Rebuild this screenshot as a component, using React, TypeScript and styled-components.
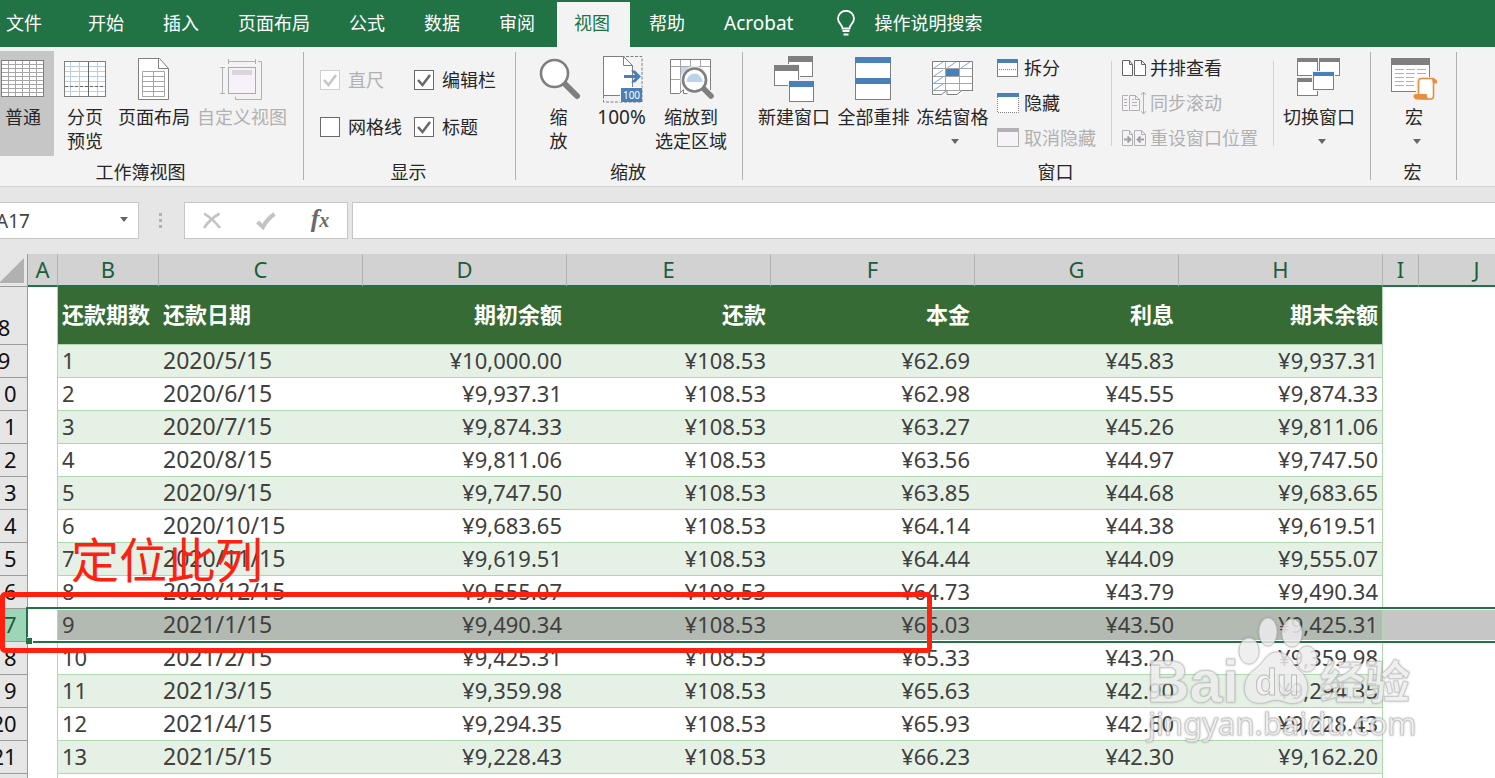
import React from "react";
import styled, { createGlobalStyle, css } from "styled-components";

const GlobalStyle = createGlobalStyle`
  *, *::before, *::after { box-sizing: border-box; }
  body {
    margin: 0;
    overflow: hidden;
    background: #ffffff;
    font-family: "Noto Sans", "Noto Sans CJK SC", sans-serif;
  }
  button, input { font: inherit; color: inherit; border: 0; background: none; padding: 0; margin: 0; }
`;

const Workbook = styled.div`
  display: flex;
  flex-direction: column;
  height: 100vh;
  overflow: hidden;
  font-size: 18px;
  color: #262626;
`;

/* ---------- tab strip ---------- */

const TabStrip = styled.nav`
  display: flex;
  flex: none;
  height: 47px;
  padding-top: 2px;
  background: #217346;
  color: #ffffff;
`;

const Tab = styled.button<{ $active?: boolean; $file?: boolean; $latin?: boolean }>`
  flex: none;
  margin-left: ${(p) => (p.$file ? 0 : 2)}px;
  padding: ${(p) => (p.$file ? "0 27px 3px 6px" : "0 20px 3px 17px")};
  line-height: 24px;
  white-space: nowrap;
  font-size: ${(p) => (p.$latin ? 19 : 18)}px;
  color: ${(p) => (p.$active ? "#217346" : "#ffffff")};
  background: ${(p) => (p.$active ? "#f3f3f3" : "transparent")};
`;

const Search = styled.button`
  display: flex;
  align-items: center;
  gap: 19px;
  padding: 0 0 3px 24px;
  line-height: 24px;
  color: #ffffff;
  white-space: nowrap;
`;

/* ---------- ribbon ---------- */

const Ribbon = styled.section`
  display: flex;
  flex: none;
  height: 140px;
  padding-top: 4px;
  background: #f3f3f3;
  border-bottom: 1px solid #d2d2d2;
`;

const Group = styled.div<{ $width: number }>`
  display: flex;
  flex-direction: column;
  flex: none;
  width: ${(p) => p.$width}px;
`;

const GroupBody = styled.div<{ $indent?: number }>`
  display: flex;
  height: 109px;
  padding-left: ${(p) => p.$indent ?? 0}px;
`;

const GroupLabel = styled.div<{ $shift?: number }>`
  padding-right: ${(p) => p.$shift ?? 2}px;
  line-height: 24px;
  text-align: center;
`;

const Divider = styled.div`
  flex: none;
  width: 1px;
  height: 128px;
  margin-top: 1px;
  background: #b1b1b1;
`;

const InnerDivider = styled.div`
  flex: none;
  width: 1px;
  height: 85px;
  margin-top: 10px;
  background: #d2d2d2;
`;

const BigButtonBox = styled.button<{ $width: number; $pressed?: boolean; $bleed?: boolean }>`
  display: flex;
  flex-direction: column;
  align-items: center;
  flex: none;
  width: ${(p) => p.$width}px;
  height: 105px;
  margin-left: ${(p) => (p.$bleed ? -8 : 0)}px;
  padding-top: 5px;
  line-height: 24px;
  white-space: nowrap;
  background: ${(p) => (p.$pressed ? "#c6c6c6" : "transparent")};
  &:disabled { color: #b1b1b1; }
  svg { flex: none; display: block; }
`;

const BigLabel = styled.span<{ $latin?: boolean }>`
  display: flex;
  flex-direction: column;
  align-items: center;
  margin-top: 1px;
  font-size: ${(p) => (p.$latin ? 19 : 18)}px;
`;

const ArrowSlot = styled.span`
  display: flex;
  align-items: center;
  height: 24px;
  padding-left: 5px;
`;

const SmallColumn = styled.div<{ $width: number; $pad: number }>`
  display: flex;
  flex-direction: column;
  flex: none;
  width: ${(p) => p.$width}px;
  padding-left: ${(p) => p.$pad}px;
`;

const SmallButton = styled.button<{ $gap: number }>`
  display: flex;
  align-items: center;
  gap: ${(p) => p.$gap}px;
  height: 35px;
  line-height: 24px;
  padding-bottom: 1px;
  white-space: nowrap;
  &:disabled { color: #b1b1b1; }
  svg { flex: none; display: block; }
`;

const CheckGrid = styled.div`
  display: grid;
  grid-template-columns: 94px auto;
  grid-auto-rows: 20px;
  row-gap: 27px;
  padding: 19px 0 0 16px;
`;

const CheckLabel = styled.label<{ $off?: boolean }>`
  display: flex;
  align-items: center;
  gap: 8px;
  white-space: nowrap;
  line-height: 20px;
  color: ${(p) => (p.$off ? "#b1b1b1" : "#262626")};
`;

const tick = (stroke: string) =>
  `url("data:image/svg+xml,%3Csvg xmlns='http://www.w3.org/2000/svg' viewBox='0 0 18 18'%3E%3Cpath d='M3 9l4.5 5L15 4' fill='none' stroke='%23${stroke}' stroke-width='2.6'/%3E%3C/svg%3E")`;

const CheckInput = styled.input`
  appearance: none;
  width: 20px;
  height: 20px;
  && { border: 1px solid #6a6a6a; background-color: #ffffff; }
  &:checked { background-image: ${tick("6a6a6a")}; }
  &&:disabled { border-color: #d0d0d0; }
  &:disabled:checked { background-image: ${tick("c6c6c6")}; }
`;

/* ---------- formula bar ---------- */

const FormulaBar = styled.section`
  display: flex;
  flex: none;
  height: 67px;
  padding: 15px 0;
  background: #e6e6e6;
`;

const NameBox = styled.div`
  display: flex;
  align-items: center;
  flex: none;
  width: 151px;
  margin-left: -12px;
  padding: 0 10px 0 7px;
  background: #ffffff;
  border: 1px solid #c6c6c6;
  color: #444444;
  input { flex: 1; min-width: 0; font-size: 19px; line-height: 24px; }
  button { display: flex; padding-bottom: 2px; }
`;

const Grip = styled.div`
  display: flex;
  flex-direction: column;
  align-items: center;
  justify-content: center;
  gap: 3px;
  width: 45px;
  padding-right: 2px;
  span { width: 3px; height: 3px; background: #b1b1b1; }
`;

const FormulaTools = styled.div`
  display: flex;
  align-items: center;
  justify-content: space-around;
  width: 164px;
  background: #ffffff;
  border: 1px solid #c6c6c6;
  svg { display: block; }
`;

const FxButton = styled.button`
  && {
    font-family: "Liberation Serif", serif;
    font-style: italic;
    font-weight: bold;
    font-size: 26px;
    line-height: 24px;
    color: #6a6a6a;
    padding-bottom: 4px;
  }
  width: 20px;
  sub { font-size: 20px; line-height: 18px; vertical-align: baseline; }
`;

const FormulaInput = styled.input`
  flex: 1;
  min-width: 0;
  && {
    margin-left: 4px;
    padding: 0 8px;
    background: #ffffff;
    border: 1px solid #c6c6c6;
    border-right: 0;
  }
`;

/* ---------- sheet ---------- */

const SheetArea = styled.main`
  position: relative;
  flex: 1;
  min-height: 0;
  overflow: hidden;
`;

const Grid = styled.table`
  table-layout: fixed;
  width: calc(100% + 19px);
  min-width: 1554px;
  margin-left: -19px;
  border-collapse: separate;
  border-spacing: 0;
  font-size: 22px;
  line-height: 30px;
  color: #404040;
  th, td { padding: 0; white-space: nowrap; }
`;

const Corner = styled.th`
  height: 33px;
  background: #e6e6e6;
  border-right: 1px solid #9b9b9b;
  border-bottom: 1px solid #9b9b9b;
  vertical-align: bottom;
  svg { display: block; margin: 0 3px 3px auto; }
`;

const ColumnHead = styled.th`
  height: 33px;
  font-weight: 400;
  color: #1b5e3c;
  background: #d2d2d2;
  border-right: 1px solid #b1b1b1;
  border-bottom: 2px solid #217346;
  vertical-align: top;
`;

const RowHead = styled.th<{ $selected?: boolean }>`
  font-weight: 400;
  vertical-align: bottom;
  color: ${(p) => (p.$selected ? "#1b5e3c" : "#111111")};
  background: ${(p) => (p.$selected ? "#9fd5b7" : "#e6e6e6")};
  border-right: 1px solid #9b9b9b;
  border-bottom: 1px solid #9b9b9b;
  && { padding-bottom: 2px; }
`;

const edge = css`border-right: 1px solid #b0d8b0;`;

const TitleCell = styled.th<{ $right?: boolean; $last?: boolean }>`
  height: 58px;
  font-weight: 700;
  color: #ffffff;
  background: #376b35;
  border-bottom: 1px solid #b0d8b0;
  text-align: ${(p) => (p.$right ? "right" : "left")};
  && { padding: 0 ${(p) => (p.$last ? 4 : 5)}px 3px 4px; }
  ${(p) => p.$last && edge}
`;

const Cell = styled.td<{ $fill: string; $right?: boolean; $last?: boolean; $date?: boolean }>`
  height: 33px;
  background: ${(p) => p.$fill};
  border-bottom: 1px solid #b0d8b0;
  text-align: ${(p) => (p.$right ? "right" : "left")};
  vertical-align: top;
  font-size: ${(p) => (p.$date ? 23 : 22)}px;
  && { padding: 0 ${(p) => (p.$last ? 4 : 5)}px 0 4px; }
  ${(p) => p.$last && edge}
`;

const MarginCell = styled.td`
  position: relative;
  ${edge}
`;

const BlankCell = styled.td<{ $selected?: boolean }>`
  background: ${(p) => (p.$selected ? "#c6c6c6" : "#ffffff")};
`;

/* Outline round the selected row, running past the right edge of the sheet */
const Selection = styled.div`
  position: absolute;
  z-index: 1;
  top: -2px;
  left: -2px;
  width: 200vw;
  height: 36px;
  border: 2px solid #217346;
  box-shadow: inset 0 0 0 1px #ffffff;
  &::after {
    content: "";
    position: absolute;
    left: -2px;
    bottom: -3px;
    width: 6px;
    height: 6px;
    background: #217346;
    box-shadow: 1px -1px 0 #ffffff;
  }
`;

const RedFrame = styled.div`
  position: absolute;
  z-index: 3;
  top: 338px;
  left: 0;
  width: 932px;
  height: 61px;
  border: 5px solid #ff2010;
  border-radius: 5px;
`;

const RedNote = styled.div`
  position: absolute;
  z-index: 3;
  top: 278px;
  left: 71px;
  font-size: 48px;
  line-height: 56px;
  color: #ff2010;
`;

const Watermark = styled.svg`
  position: absolute;
  z-index: 2;
  top: 358px;
  left: 1140px;
  filter: drop-shadow(0 0 1px rgba(90, 90, 90, 0.5));
`;

/* ---------- icons ---------- */

const G = "#7f7f7f";
const B = "#4a80b8";

const Icon = ({ children }: { children: React.ReactNode }) => (
  <svg width="48" height="48" viewBox="0 0 48 48" fill="none" aria-hidden="true">{children}</svg>
);

const Win = ({ x, y, w, h, c = G, bar = 6 }: { x: number; y: number; w: number; h: number; c?: string; bar?: number }) => (
  <>
    <rect x={x - 1} y={y - 1} width={w + 2} height={h + 2} fill="#f3f3f3" />
    <rect x={x + 0.5} y={y + 0.5} width={w - 1} height={h - 1} fill="#fff" stroke={G} />
    <rect x={x} y={y} width={w} height={bar} fill={c} />
  </>
);

const NormalIcon = () => (
  <Icon>
    <rect x="2.5" y="4.5" width="42" height="36" fill="#fff" stroke={G} />
    <path stroke="#a6a6a6" d="M9.5 5v35M16.5 5v35M23.5 5v35M30.5 5v35M37.5 5v35M3 8.5h41M3 12.5h41M3 16.5h41M3 20.5h41M3 24.5h41M3 28.5h41M3 32.5h41M3 36.5h41" />
  </Icon>
);

const BreakIcon = () => (
  <Icon>
    <rect x="3.5" y="5.5" width="41" height="35" fill="#fff" stroke={G} />
    <path stroke="#b9cfe8" d="M9.5 6v34M18.5 6v34M36.5 6v34M4 10.5h40M4 15.5h40M4 20.5h40M4 25.5h40M4 30.5h40M4 35.5h40" />
    <path stroke="#666" d="M27.5 6v34" />
    <path stroke="#666" strokeDasharray="3 2" d="M4 30.5h40" />
  </Icon>
);

const PageIcon = () => (
  <Icon>
    <path d="M8.500 2.500h21l9 10v31h-30z" fill="#fff" stroke={G} />
    <path d="M28.500 2.500v10h10" stroke={G} />
    <path stroke="#a6a6a6" d="M12.500 15.500h22v25h-22zM23.500 16v24M13 20.500h21M13 25.500h21M13 30.500h21M13 35.500h21" />
  </Icon>
);

const CustomIcon = () => (
  <Icon>
    <rect x="10.500" y="11.500" width="27" height="26" fill="#f7f2f9" stroke="#aaa" />
    <rect x="14" y="14" width="20" height="5" fill="#dad5dc" />
    <path stroke="#b1b1b1" d="M10.500 3v5M37.500 3v5M11 5.500h26M2 11.500h5M2 37.500h5M4.500 12v25M40 5.500h3.500v38h-26v-3" />
  </Icon>
);

const ZoomIcon = () => (
  <Icon>
    <path d="M29 27L42 40" stroke={G} strokeWidth="6" strokeLinecap="round" />
    <circle cx="19.500" cy="17.500" r="13.500" fill="#fff" stroke={G} strokeWidth="2.600" />
  </Icon>
);

const HundredIcon = () => (
  <Icon>
    <path d="M5.500 .5h38.500v45.500h-38.500z" stroke={G} strokeDasharray="3 1.500" />
    <path d="M5.500 .5h20l9 9v30h-29z" fill="#fff" stroke={G} />
    <path d="M25.500 .5v9h9" stroke={G} />
    <path d="M26 20.500h13" stroke={B} strokeWidth="3" />
    <path d="M33 14.500h4l6 6-6 6h-4l5.500-6z" fill={B} />
    <rect x="22" y="31" width="22" height="15" fill="#fff" />
    <rect x="23" y="32" width="21" height="14" fill={B} />
    <text x="33.500" y="43" fontSize="10" fill="#fff" textAnchor="middle">100</text>
  </Icon>
);

const FitIcon = () => (
  <Icon>
    <path d="M3.500 3.500h40v33l-4-3-4 4h-18l-3-4-3 4h-8z" fill="#fff" />
    <path stroke="#a6a6a6" d="M13.500 4v32M23.500 4v9M33.500 4v9M4 10.500h39M4 23.500h12" />
    <path stroke={G} d="M43.500 34v-30.500h-40v34h9l4-4v4h4" />
    <circle cx="27.500" cy="24" r="14" fill="#f3f3f3" />
    <path d="M35 32L44 41" stroke="#f3f3f3" strokeWidth="8" />
    <path d="M14 11h8l-8 8z" fill="#c5d8ee" />
    <path d="M36 32L44 40" stroke={G} strokeWidth="5.500" strokeLinecap="round" />
    <circle cx="27.500" cy="24" r="11.500" fill="#fff" stroke={G} strokeWidth="2.600" />
    <path d="M19.500 26a8 8.500 0 0 1 16 0z" fill="#bdd3ec" />
  </Icon>
);

const NewWinIcon = () => (
  <Icon>
    <Win x={18} y={0} w={25} h={21} />
    <Win x={4} y={9} w={25} h={21} />
    <Win x={19} y={25} w={25} h={21} c={B} />
  </Icon>
);

const ArrangeIcon = () => (
  <Icon>
    <rect x="5.500" y="1.500" width="35" height="42" fill="#fff" stroke={G} />
    <rect x="5" y="1" width="36" height="6" fill={B} />
    <rect x="5" y="22" width="36" height="6" fill={B} />
  </Icon>
);

const FreezeIcon = () => (
  <Icon>
    <path d="M3.500 5.500h40v29h-8l-4 5h-9v-3l-3 3h-6v-3l-3 3h-7z" fill="#fff" />
    <path stroke="#a6a6a6" d="M16.500 6v28M30.500 6v28M4 12.500h39M4 20.500h39M4 27.500h39M4 34.500h39" />
    <path stroke="#7ea6d3" d="M5 12l9-6M18 12l9-6M32 12l9-6M5 20l9-6M5 27l9-6M5 34l9-6" />
    <rect x="17" y="13" width="13" height="7" fill={B} />
    <path stroke={G} d="M43.500 35v-29.500h-40v29M3.500 34.500v4h9l5-4M18 34.500v4h10l5-4M33 34.500h10.500" />
  </Icon>
);

const SwitchIcon = () => (
  <Icon>
    <Win x={2} y={2} w={21} h={18} bar={4} />
    <Win x={24} y={2} w={21} h={18} bar={4} />
    <Win x={2} y={22} w={21} h={18} bar={4} />
    <Win x={18} y={16} w={21} h={18} bar={4} c={B} />
  </Icon>
);

const MacroIcon = () => (
  <Icon>
    <rect x="1.500" y="2.500" width="38" height="33" fill="#fff" stroke={G} />
    <rect x="1" y="2" width="39" height="7" fill={G} />
    <path stroke="#b1b1b1" d="M5 13.500h9M16 13.500h9M27 13.500h9M5 17.500h9M16 17.500h9M27 17.500h9M5 21.500h9M16 21.500h8M5 25.500h9M16 25.500h8M5 29.500h9M16 29.500h8" />
    <path d="M26 21h22v8h-3v16h-22v-8h3z" fill="#f3f3f3" />
    <path d="M28.500 38v-12q0-3.500 3-3.500h12v17.500q0 3-3 3h-8q-4 0-4-5z" fill="#fff" stroke="#e88e3f" strokeWidth="1.600" />
    <path d="M42 22.500q5 0 5 3v2h-4zM25 38h12q-1 4 3 5.500h-14q-2.500-1-2.500-3t1.500-2.500z" fill="#e88e3f" />
  </Icon>
);

const Small = ({ w, children }: { w: number; children: React.ReactNode }) => (
  <svg width={w} height="24" viewBox={`0 0 ${w} 24`} fill="none" aria-hidden="true">{children}</svg>
);

const SplitIcon = () => (
  <Small w={22}>
    <rect x=".5" y="3.500" width="20" height="17" fill="#fff" stroke={G} />
    <rect width="21" height="4" y="3" fill={B} />
    <path d="M2 13.500h18" stroke={G} strokeDasharray="1 1" />
  </Small>
);
const HideIcon = () => (
  <Small w={22}>
    <rect y="2" width="22" height="20" fill="#fff" />
    <path d="M.5 6v15.500h21V6" stroke={G} strokeDasharray="1 1" />
    <rect y="2" width="22" height="4" fill={B} />
  </Small>
);
const UnhideIcon = () => (
  <Small w={22}>
    <rect x=".5" y="2.500" width="21" height="18" fill="#f6f2f8" stroke="#b1b1b1" />
    <rect y="2" width="22" height="4" fill="#b1b1b1" />
  </Small>
);
const twoPages = "M.5 4.500h7l3 4v11h-10zM7.500 4.500v4h3M12.500 4.500h7l4 4v11h-11zM19.500 4.500v4h4";
const SideIcon = () => <Small w={25}><path d={twoPages} fill="#fff" stroke="#666" /></Small>;
const SyncIcon = () => (
  <Small w={25}>
    <path d="M6 4.500h-5.500v15h6M7.500 4.500h6l4 4v11h-10zM13.500 4.500v4h4" fill="#f7f2f9" stroke="#b1b1b1" />
    <path d="M2 8.500h3M2 11.500h3M2 14.500h3M10 8.500h2M10 11.500h5M10 14.500h5M21.500 1v22M19 4l2.500-3L24 4M19 20l2.500 3L24 20" stroke="#b1b1b1" />
  </Small>
);
const ResetIcon = () => (
  <Small w={25}>
    <path d={twoPages} fill="#f7f2f9" stroke="#b1b1b1" />
    <path d="M2 13.500h6M5.500 10.500l3 3-3 3M22 13.500h-6M18.500 10.500l-3 3 3 3" stroke="#a0a0a0" strokeWidth="1.800" />
  </Small>
);

const Caret = () => (
  <svg width="8" height="5" viewBox="0 0 8 5" aria-hidden="true"><path d="M0 0h8L4 5z" fill="#666" /></svg>
);

/* ---------- composed parts ---------- */

type BigProps = {
  icon: React.ReactNode;
  lines: string[];
  width: number;
  arrow?: boolean;
  pressed?: boolean;
  bleed?: boolean;
  disabled?: boolean;
  latin?: boolean;
};

const BigButton = ({ icon, lines, width, arrow, pressed, bleed, disabled, latin }: BigProps) => (
  <BigButtonBox type="button" $width={width} $pressed={pressed} $bleed={bleed} disabled={disabled}>
    {icon}
    <BigLabel $latin={latin}>{lines.map((l) => <span key={l}>{l}</span>)}</BigLabel>
    {arrow && <ArrowSlot><Caret /></ArrowSlot>}
  </BigButtonBox>
);

const Check = ({ id, text, checked, disabled }: { id: string; text: string; checked?: boolean; disabled?: boolean }) => (
  <CheckLabel htmlFor={id} $off={disabled}>
    <CheckInput id={id} type="checkbox" defaultChecked={checked} disabled={disabled} />
    {text}
  </CheckLabel>
);

const tabs = ["开始", "插入", "页面布局", "公式", "数据", "审阅", "视图", "帮助", "Acrobat"];
const columns: [string, number | undefined][] = [
  ["A", 30], ["B", 101], ["C", 204], ["D", 204], ["E", 204], ["F", 204], ["G", 204], ["H", 204], ["I", 36], ["J", 116], ["", undefined],
];
const titles = ["还款期数", "还款日期", "期初余额", "还款", "本金", "利息", "期末余额"];
const rows = [
  ["1", "2020/5/15", "¥10,000.00", "¥108.53", "¥62.69", "¥45.83", "¥9,937.31"],
  ["2", "2020/6/15", "¥9,937.31", "¥108.53", "¥62.98", "¥45.55", "¥9,874.33"],
  ["3", "2020/7/15", "¥9,874.33", "¥108.53", "¥63.27", "¥45.26", "¥9,811.06"],
  ["4", "2020/8/15", "¥9,811.06", "¥108.53", "¥63.56", "¥44.97", "¥9,747.50"],
  ["5", "2020/9/15", "¥9,747.50", "¥108.53", "¥63.85", "¥44.68", "¥9,683.65"],
  ["6", "2020/10/15", "¥9,683.65", "¥108.53", "¥64.14", "¥44.38", "¥9,619.51"],
  ["7", "2020/11/15", "¥9,619.51", "¥108.53", "¥64.44", "¥44.09", "¥9,555.07"],
  ["8", "2020/12/15", "¥9,555.07", "¥108.53", "¥64.73", "¥43.79", "¥9,490.34"],
  ["9", "2021/1/15", "¥9,490.34", "¥108.53", "¥65.03", "¥43.50", "¥9,425.31"],
  ["10", "2021/2/15", "¥9,425.31", "¥108.53", "¥65.33", "¥43.20", "¥9,359.98"],
  ["11", "2021/3/15", "¥9,359.98", "¥108.53", "¥65.63", "¥42.90", "¥9,294.35"],
  ["12", "2021/4/15", "¥9,294.35", "¥108.53", "¥65.93", "¥42.60", "¥9,228.43"],
  ["13", "2021/5/15", "¥9,228.43", "¥108.53", "¥66.23", "¥42.30", "¥9,162.20"],
];
const SELECTED_ROW = 17;

export default function App() {
  return (
    <Workbook>
      <GlobalStyle />
      <TabStrip>
        <Tab type="button" $file>文件</Tab>
        {tabs.map((t) => (
          <Tab key={t} type="button" $active={t === "视图"} $latin={t === "Acrobat"}>{t}</Tab>
        ))}
        <Search type="button">
          <svg width="18" height="26" viewBox="0 0 18 26" fill="none" stroke="#fff" strokeWidth="1.800" aria-hidden="true">
            <path d="M5.500 18.500c0-4-4.500-5-4.500-10a8 7.700 0 0 1 16 0c0 5-4.500 6-4.500 10zM5.500 21h7M6.500 24.500h5" />
          </svg>
          操作说明搜索
        </Search>
      </TabStrip>

      <Ribbon>
        <Group $width={303}>
          <GroupBody>
            <BigButton icon={<NormalIcon />} lines={["普通"]} width={62} pressed bleed />
            <BigButton icon={<BreakIcon />} lines={["分页", "预览"]} width={62} />
            <BigButton icon={<PageIcon />} lines={["页面布局"]} width={76} />
            <BigButton icon={<CustomIcon />} lines={["自定义视图"]} width={100} disabled />
          </GroupBody>
          <GroupLabel $shift={22}>工作簿视图</GroupLabel>
        </Group>
        <Divider />
        <Group $width={211}>
          <GroupBody>
            <CheckGrid>
              <Check id="ruler" text="直尺" checked disabled />
              <Check id="formula" text="编辑栏" checked />
              <Check id="gridlines" text="网格线" />
              <Check id="headings" text="标题" checked />
            </CheckGrid>
          </GroupBody>
          <GroupLabel>显示</GroupLabel>
        </Group>
        <Divider />
        <Group $width={226}>
          <GroupBody $indent={12}>
            <BigButton icon={<ZoomIcon />} lines={["缩", "放"]} width={61} />
            <BigButton icon={<HundredIcon />} lines={["100%"]} width={65} latin />
            <BigButton icon={<FitIcon />} lines={["缩放到", "选定区域"]} width={74} />
          </GroupBody>
          <GroupLabel>缩放</GroupLabel>
        </Group>
        <Divider />
        <Group $width={627}>
          <GroupBody $indent={11}>
            <BigButton icon={<NewWinIcon />} lines={["新建窗口"]} width={80} />
            <BigButton icon={<ArrangeIcon />} lines={["全部重排"]} width={79} />
            <BigButton icon={<FreezeIcon />} lines={["冻结窗格"]} width={79} arrow />
            <SmallColumn $width={119} $pad={5}>
              <SmallButton type="button" $gap={5}><SplitIcon />拆分</SmallButton>
              <SmallButton type="button" $gap={5}><HideIcon />隐藏</SmallButton>
              <SmallButton type="button" $gap={5} disabled><UnhideIcon />取消隐藏</SmallButton>
            </SmallColumn>
            <InnerDivider />
            <SmallColumn $width={161} $pad={10}>
              <SmallButton type="button" $gap={3}><SideIcon />并排查看</SmallButton>
              <SmallButton type="button" $gap={3} disabled><SyncIcon />同步滚动</SmallButton>
              <SmallButton type="button" $gap={3} disabled><ResetIcon />重设窗口位置</SmallButton>
            </SmallColumn>
            <InnerDivider />
            <BigButton icon={<SwitchIcon />} lines={["切换窗口"]} width={90} arrow />
          </GroupBody>
          <GroupLabel>窗口</GroupLabel>
        </Group>
        <Divider />
        <Group $width={85}>
          <GroupBody $indent={1}>
            <BigButton icon={<MacroIcon />} lines={["宏"]} width={84} arrow />
          </GroupBody>
          <GroupLabel>宏</GroupLabel>
        </Group>
        <Divider />
      </Ribbon>

      <FormulaBar>
        <NameBox>
          <input aria-label="名称框" defaultValue="A17" />
          <button type="button" aria-label="名称列表"><Caret /></button>
        </NameBox>
        <Grip><span /><span /><span /></Grip>
        <FormulaTools>
          <button type="button" aria-label="取消">
            <svg width="20" height="18" viewBox="0 0 20 18" fill="none" stroke="#c3c3c3" strokeWidth="2.600"><path d="M2 1.500Q11 7 18 16M17.500 1.500Q8 7 2 16" /></svg>
          </button>
          <button type="button" aria-label="输入">
            <svg width="20" height="18" viewBox="0 0 20 18" fill="none" stroke="#c3c3c3" strokeWidth="4"><path d="M1.500 10l5.500 5Q11 7 18.500 2" /></svg>
          </button>
          <FxButton type="button" aria-label="插入函数">f<sub>x</sub></FxButton>
        </FormulaTools>
        <FormulaInput aria-label="编辑栏" />
      </FormulaBar>

      <SheetArea>
        <Grid>
          <colgroup>
            <col width={47} />
            {columns.map(([name, w]) => <col key={name} width={w} />)}
          </colgroup>
          <thead>
            <tr>
              <Corner>
                <svg width="25" height="25" viewBox="0 0 25 25" aria-hidden="true"><path d="M25 0v25H0z" fill="#b1b1b1" /></svg>
              </Corner>
              {columns.map(([name]) => <ColumnHead key={name} scope="col">{name}</ColumnHead>)}
            </tr>
          </thead>
          <tbody>
            <tr>
              <RowHead scope="row">8</RowHead>
              <MarginCell />
              {titles.map((t, i) => (
                <TitleCell key={t} scope="col" $right={i > 1} $last={i === 6}>{t}</TitleCell>
              ))}
              <BlankCell colSpan={3} />
            </tr>
            {rows.map((r, n) => {
              const rowNumber = n + 9;
              const selected = rowNumber === SELECTED_ROW;
              const fill = selected ? "#b2bab2" : n % 2 ? "#ffffff" : "#e5f1e5";
              return (
                <tr key={rowNumber}>
                  <RowHead scope="row" $selected={selected}>{rowNumber}</RowHead>
                  <MarginCell>{selected && <Selection />}</MarginCell>
                  {r.map((v, i) => (
                    <Cell key={i} $fill={fill} $right={i > 1} $last={i === 6} $date={i === 1}>{v}</Cell>
                  ))}
                  <BlankCell colSpan={3} $selected={selected} />
                </tr>
              );
            })}
            <tr>
              <RowHead />
              <MarginCell />
              {titles.map((t, i) => <Cell key={t} $fill="#ffffff" $last={i === 6} />)}
              <BlankCell colSpan={3} />
            </tr>
          </tbody>
        </Grid>
        <RedNote>定位此列</RedNote>
        <RedFrame />
        <Watermark width="290" height="140" viewBox="0 0 290 140" aria-hidden="true">
          <g fill="#fff" fillOpacity="0.75" stroke="#b8b8b8" strokeOpacity="0.6" strokeWidth="1">
            <ellipse cx="109" cy="39" rx="10" ry="13" />
            <ellipse cx="128" cy="20" rx="9" ry="14" />
            <ellipse cx="152" cy="21" rx="10" ry="14" />
            <ellipse cx="167" cy="47" rx="10" ry="13" />
            <path d="M137 40C126 40 124 52 113 59C101 68 101 90 118 91C126 92 130 88 136 88C144 88 148 93 156 91C170 89 171 69 161 60C150 51 150 40 137 40Z" />
            <text x="7" y="90" fontFamily="Liberation Sans, sans-serif" fontWeight="700" fontSize="59">Bai</text>
            <text x="180" y="87" fontFamily="Noto Sans CJK SC, sans-serif" fontWeight="700" fontSize="45">经验</text>
            <text x="8" y="123" fontFamily="Noto Sans, sans-serif" fontSize="31">jingyan.baidu.com</text>
            <text x="115" y="83" fontFamily="Liberation Sans, sans-serif" fontWeight="700" fontSize="36" fillOpacity="0.4" stroke="#999">du</text>
          </g>
        </Watermark>
      </SheetArea>
    </Workbook>
  );
}
